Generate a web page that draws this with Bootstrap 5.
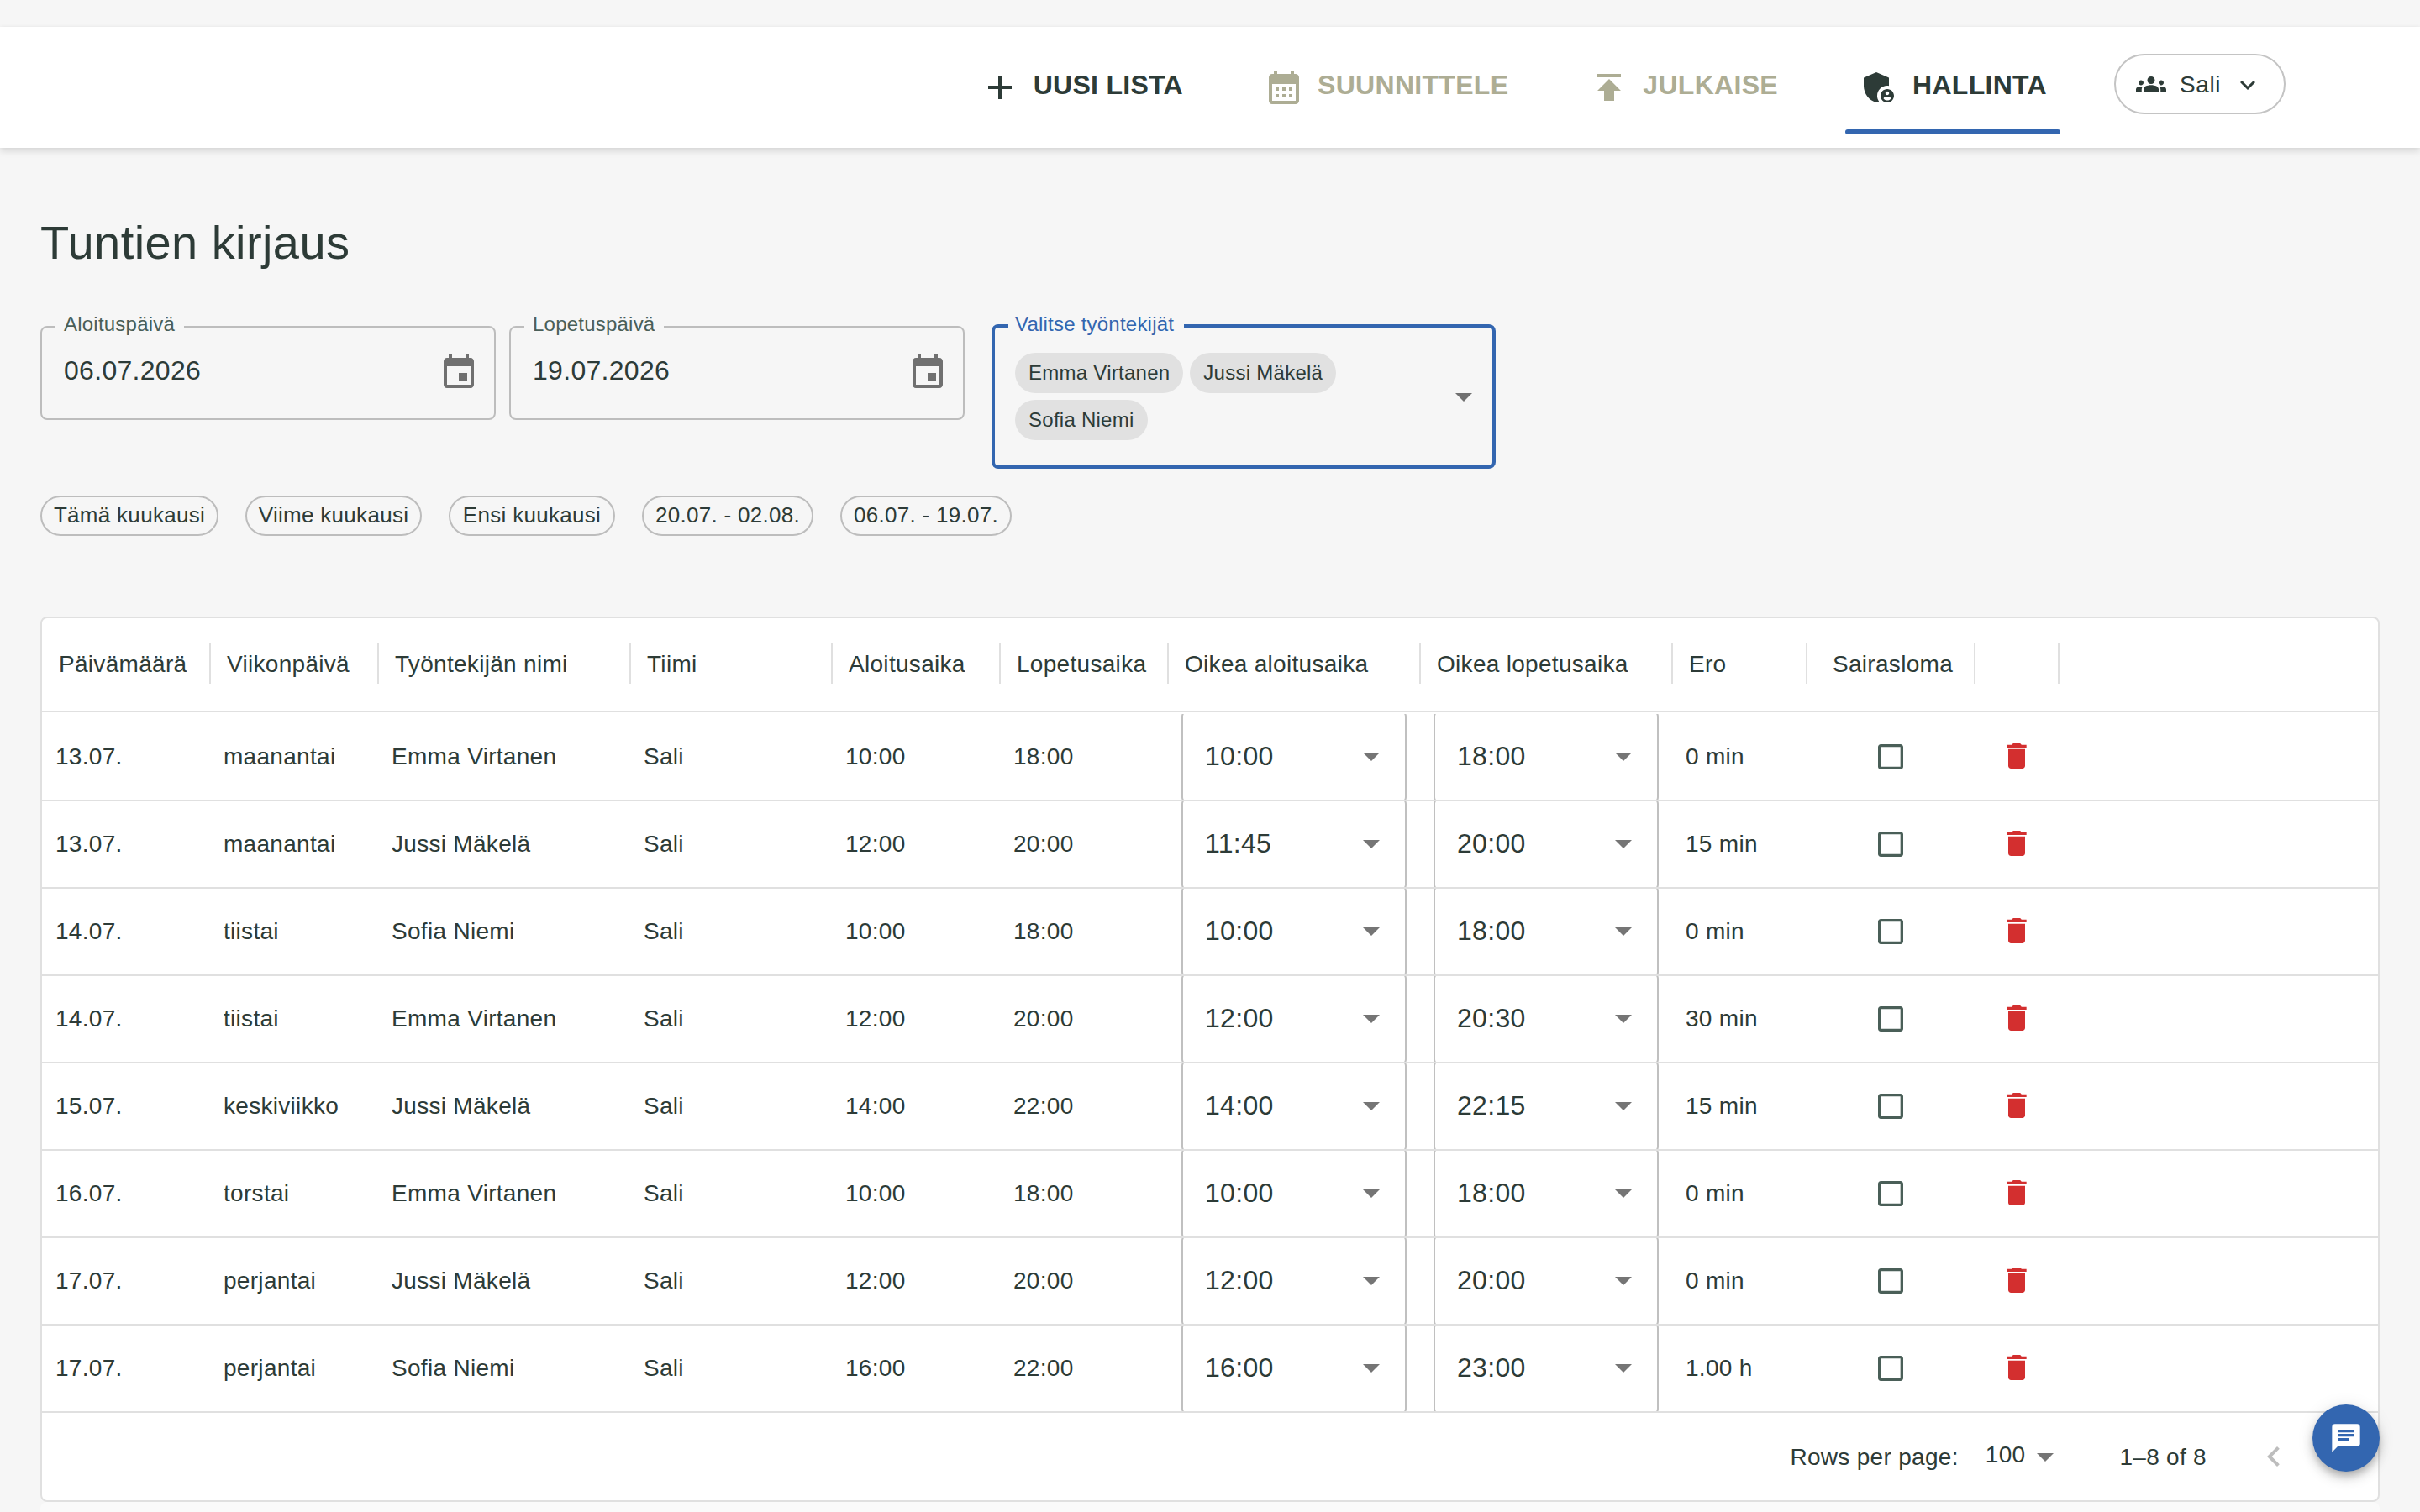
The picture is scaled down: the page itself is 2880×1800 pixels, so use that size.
<!DOCTYPE html>
<html lang="fi">
<head>
<meta charset="utf-8">
<meta name="viewport" content="width=device-width, initial-scale=1">
<title>Tuntien kirjaus</title>
<link href="https://cdn.jsdelivr.net/npm/bootstrap@5.3.0/dist/css/bootstrap.min.css" rel="stylesheet">
<style>
  :root { --ink: #2d3b37; --olive: #adad94; --accent: #3366b0; --line: #e0e0e0; --muted: #4a5f58; --canvas: #f6f6f6; }
  html, body { height: 100%; overflow: hidden; }
  body { background: var(--canvas); color: var(--ink); font-family: "Liberation Sans", Arial, sans-serif; font-size: 28px; line-height: 40px; letter-spacing: .3px; padding-top: 32px; }
  svg { display: block; fill: currentColor; flex: none; }
  .i48 { width: 48px; height: 48px; } .i40 { width: 40px; height: 40px; } .i36 { width: 36px; height: 36px; }
  .topbar { height: 144px; background: #fff; padding: 0 160px 0 0; box-shadow: 0 4px 8px rgba(0,0,0,.12), 0 0 4px rgba(0,0,0,.04); }
  .topnav { gap: 64px; }
  .topnav .nav-link { height: 112px; padding: 0 16px; gap: 16px; font-size: 32px; font-weight: 700; letter-spacing: .3px; color: var(--olive); }
  .topnav .nav-link span { margin-top: -7px; }
  .topnav .nav-link.dark { color: var(--ink); }
  .underbar { left: 0; right: 0; bottom: 0; height: 6px; border-radius: 3px; background: var(--accent); }
  .team-btn { width: 204px; height: 72px; border: 2px solid #c4c4c4; color: var(--ink); padding: 0 24px; font-size: 28px; letter-spacing: .6px; border-radius: 36px; margin-top: -8px; }
  .team-btn span { padding-top: 2px; margin-left: 16px; }
  .team-btn .arrow { margin: 2px 0 0 14px; }
  .page { padding: 76px 48px 0; }
  .page h1 { font-size: 56px; line-height: 74px; font-weight: 400; letter-spacing: .42px; margin: 0 0 60px; }
  .outline { position: relative; border: 2px solid #bdbdbd; border-radius: 8px; height: 112px; width: 542px; padding: 0 18px 0 26px; margin-top: 2px; font-size: 32px; }
  .outline .tag { position: absolute; left: 16px; top: -20px; padding: 0 11px 0 10px; background: var(--canvas); color: var(--muted); font-size: 24px; line-height: 32px; letter-spacing: .22px; white-space: nowrap; }
  .outline .val { margin-top: -6px; }
  .outline svg { color: #707070; }
  .outline.active { width: 600px; height: 172px; border: 4px solid var(--accent); padding: 0 10px 0 24px; margin: 0 0 0 32px; }
  .outline.active .tag { color: var(--accent); left: 16px; padding: 0 12px 0 8px; }
  .people { width: 420px; gap: 8px; }
  .person { height: 48px; line-height: 47px; border-radius: 24px; background: #e1e1e1; padding: 0 16px; font-size: 24px; letter-spacing: .26px; }
  .ranges { gap: 32px; margin-top: 32px; }
  .range { height: 48px; line-height: 43px; border: 2px solid #bdbdbd; border-radius: 24px; text-align: center; font-size: 26px; letter-spacing: .3px; white-space: nowrap; }
  .sheet { margin-top: 96px; border: 2px solid var(--line); border-radius: 8px; background: #fff; }
  .hours { table-layout: fixed; width: 100%; margin: 0; border-collapse: separate; border-spacing: 0; }
  .hours th { height: 112px; padding: 0 0 0 20px; font-weight: 400; position: relative; border-bottom: 2px solid var(--line); vertical-align: middle; white-space: nowrap; }
  .hours th:not(:last-child)::after { content: ""; position: absolute; right: -1px; top: 30px; width: 2px; height: 48px; background: var(--line); }
  .hours td { height: 104px; padding: 0 16px; border-bottom: 2px solid var(--line); vertical-align: middle; white-space: nowrap; }
  .hours tbody tr:first-child td { height: 106px; padding-top: 2px; }
  .clip { height: 102px; overflow: hidden; }
  .picker { flex: none; width: 268px; height: 112px; border: 2px solid #c0c0c0; border-radius: 8px; padding: 0 16px 0 26px; font-size: 32px; }
  .picker span { margin-top: -3px; }
  .picker svg { margin-top: -2px; }
  .picker svg, .pager .drop { color: #757575; }
  .tick { color: var(--muted); margin: 0 auto; } .bin { color: #d32f2f; margin: -2px auto 0; }
  .pager { height: 104px; padding-right: 100px; }
  .pager .caption-text { padding-top: 2px; }
  .count { margin-left: 64px; }
  .prev { margin-left: 56px; color: #bdbdbd; }
  .below { height: 60px; background: #fafafa; border-radius: 8px; }
  .fab { position: fixed; left: 2752px; top: 1672px; width: 80px; height: 80px; background: var(--accent); color: #fff; box-shadow: 0 6px 10px -2px rgba(0,0,0,.2), 0 8px 16px rgba(0,0,0,.14), 0 2px 20px rgba(0,0,0,.1); }
</style>
<script src="https://cdn.jsdelivr.net/npm/bootstrap@5.3.0/dist/js/bootstrap.bundle.min.js"></script>
</head>
<body>
<svg width="0" height="0" class="d-none">
  <symbol id="event" viewBox="0 0 24 24"><path d="M17 12h-5v5h5v-5zM16 1v2H8V1H6v2H5c-1.11 0-1.99.9-1.99 2L3 19c0 1.1.89 2 2 2h14c1.1 0 2-.9 2-2V5c0-1.1-.9-2-2-2h-1V1h-2zm3 18H5V8h14v11z"/></symbol>
  <symbol id="drop" viewBox="0 0 24 24"><path d="M7 10l5 5 5-5z"/></symbol>
  <symbol id="box" viewBox="0 0 24 24"><path d="M19 5v14H5V5h14m0-2H5c-1.1 0-2 .9-2 2v14c0 1.1.9 2 2 2h14c1.1 0 2-.9 2-2V5c0-1.1-.9-2-2-2z"/></symbol>
  <symbol id="bin" viewBox="0 0 24 24"><path d="M6 19c0 1.1.9 2 2 2h8c1.1 0 2-.9 2-2V7H6v12zM19 4h-3.5l-1-1h-5l-1 1H5v2h14V4z"/></symbol>
</svg>

<header class="topbar d-flex align-items-center justify-content-end position-relative">
  <nav class="nav topnav align-items-center">
    <a class="nav-link dark d-flex align-items-center"><svg class="i48" viewBox="0 0 24 24"><path d="M19 13h-6v6h-2v-6H5v-2h6V5h2v6h6v2z"/></svg><span>UUSI LISTA</span></a>
    <a class="nav-link d-flex align-items-center"><svg class="i48" viewBox="0 0 24 24"><path d="M19 4h-1V2h-2v2H8V2H6v2H5c-1.11 0-1.99.9-1.99 2L3 20c0 1.1.89 2 2 2h14c1.1 0 2-.9 2-2V6c0-1.1-.9-2-2-2zm0 16H5V10h14v10zM9 14H7v-2h2v2zm4 0h-2v-2h2v2zm4 0h-2v-2h2v2zm-8 4H7v-2h2v2zm4 0h-2v-2h2v2zm4 0h-2v-2h2v2z"/></svg><span>SUUNNITTELE</span></a>
    <a class="nav-link d-flex align-items-center"><svg class="i48" viewBox="0 0 24 24"><path d="M5 4v2h14V4H5zm0 10h4v6h6v-6h4l-7-7-7 7z"/></svg><span>JULKAISE</span></a>
    <a class="nav-link dark d-flex align-items-center position-relative"><svg class="i48" viewBox="0 0 24 24"><path d="M17 11c.34 0 .67.04 1 .09V6.27L10.5 3 3 6.27v4.91c0 4.54 3.2 8.79 7.5 9.82.55-.13 1.08-.32 1.6-.55-.69-.98-1.1-2.17-1.1-3.45 0-3.31 2.69-6 6-6z"/><path d="M17 13c-2.21 0-4 1.79-4 4s1.79 4 4 4 4-1.79 4-4-1.79-4-4-4zm0 1.38c.62 0 1.12.51 1.12 1.12s-.5 1.12-1.12 1.12-1.12-.51-1.12-1.12.5-1.12 1.12-1.12zm0 5.37c-.93 0-1.74-.46-2.24-1.17.05-.72 1.51-1.08 2.24-1.08s2.19.36 2.24 1.08c-.5.71-1.31 1.17-2.24 1.17z"/></svg><span>HALLINTA</span><i class="underbar position-absolute"></i></a>
    <button class="team-btn bg-white d-flex align-items-center"><svg class="i36" viewBox="0 0 24 24"><path d="M12 12.75c1.63 0 3.07.39 4.24.9 1.08.48 1.76 1.56 1.76 2.73V18H6v-1.61c0-1.18.68-2.26 1.76-2.73 1.17-.52 2.61-.91 4.24-.91zM4 13c1.1 0 2-.9 2-2s-.9-2-2-2-2 .9-2 2 .9 2 2 2zm1.13 1.1c-.37-.06-.74-.1-1.13-.1-.99 0-1.93.21-2.78.58C.48 14.9 0 15.62 0 16.43V18h4.5v-1.61c0-.83.23-1.61.63-2.29zM20 13c1.1 0 2-.9 2-2s-.9-2-2-2-2 .9-2 2 .9 2 2 2zm4 3.43c0-.81-.48-1.53-1.22-1.85-.85-.37-1.79-.58-2.78-.58-.39 0-.76.04-1.13.1.4.68.63 1.46.63 2.29V18H24v-1.57zM12 6c1.66 0 3 1.34 3 3s-1.34 3-3 3-3-1.34-3-3 1.34-3 3-3z"/></svg><span>Sali</span><svg class="i36 arrow" viewBox="0 0 24 24"><path d="M7.41 8.59 12 13.17l4.59-4.58L18 10l-6 6-6-6z"/></svg></button>
  </nav>
</header>

<main class="page">
  <h1>Tuntien kirjaus</h1>
  <div class="d-flex align-items-start">
    <div class="outline d-flex align-items-center justify-content-between"><span class="tag">Aloituspäivä</span><span class="val">06.07.2026</span><svg class="i48"><use href="#event"/></svg></div>
    <div class="outline d-flex align-items-center justify-content-between ms-3"><span class="tag">Lopetuspäivä</span><span class="val">19.07.2026</span><svg class="i48"><use href="#event"/></svg></div>
    <div class="outline active d-flex align-items-center justify-content-between"><span class="tag">Valitse työntekijät</span>
      <div class="people d-flex flex-wrap"><span class="person">Emma Virtanen</span><span class="person">Jussi Mäkelä</span><span class="person">Sofia Niemi</span></div>
      <svg class="i48"><use href="#drop"/></svg></div>
  </div>
  <div class="ranges d-flex">
    <span class="range" style="width:212px">Tämä kuukausi</span>
    <span class="range" style="width:210px">Viime kuukausi</span>
    <span class="range" style="width:198px">Ensi kuukausi</span>
    <span class="range" style="width:204px">20.07. - 02.08.</span>
    <span class="range" style="width:204px">06.07. - 19.07.</span>
  </div>

  <section class="sheet">
    <table class="hours">
      <colgroup><col style="width:200px"><col style="width:200px"><col style="width:300px"><col style="width:240px"><col style="width:200px"><col style="width:200px"><col style="width:300px"><col style="width:300px"><col style="width:160px"><col style="width:200px"><col style="width:100px"><col></colgroup>
      <thead><tr><th>Päivämäärä</th><th>Viikonpäivä</th><th>Työntekijän nimi</th><th>Tiimi</th><th>Aloitusaika</th><th>Lopetusaika</th><th>Oikea aloitusaika</th><th>Oikea lopetusaika</th><th>Ero</th><th style="padding-left:31px">Sairasloma</th><th></th><th></th></tr></thead>
      <tbody id="rows"></tbody>
    </table>
    <div class="pager d-flex align-items-center justify-content-end">
      <span class="caption-text">Rows per page:</span><span class="ms-4 ps-2 pb-1">100</span><svg class="i48 drop"><use href="#drop"/></svg>
      <span class="count caption-text">1–8 of 8</span>
      <svg class="i48 prev" viewBox="0 0 24 24"><path d="M15.41 16.59 10.83 12l4.58-4.59L14 6l-6 6 6 6z"/></svg>
    </div>
  </section>
  <div class="below"></div>
</main>
<a class="fab rounded-circle d-flex align-items-center justify-content-center"><svg class="i40" viewBox="0 0 24 24"><path d="M20 2H4c-1.1 0-1.99.9-1.99 2L2 22l4-4h14c1.1 0 2-.9 2-2V4c0-1.1-.9-2-2-2zM6 9h12v2H6V9zm8 5H6v-2h8v2zm4-6H6V6h12v2z"/></svg></a>
<script>
  const shifts = [
    ['13.07.', 'maanantai', 'Emma Virtanen', 'Sali', '10:00', '18:00', '10:00', '18:00', '0 min'],
    ['13.07.', 'maanantai', 'Jussi Mäkelä', 'Sali', '12:00', '20:00', '11:45', '20:00', '15 min'],
    ['14.07.', 'tiistai', 'Sofia Niemi', 'Sali', '10:00', '18:00', '10:00', '18:00', '0 min'],
    ['14.07.', 'tiistai', 'Emma Virtanen', 'Sali', '12:00', '20:00', '12:00', '20:30', '30 min'],
    ['15.07.', 'keskiviikko', 'Jussi Mäkelä', 'Sali', '14:00', '22:00', '14:00', '22:15', '15 min'],
    ['16.07.', 'torstai', 'Emma Virtanen', 'Sali', '10:00', '18:00', '10:00', '18:00', '0 min'],
    ['17.07.', 'perjantai', 'Jussi Mäkelä', 'Sali', '12:00', '20:00', '12:00', '20:00', '0 min'],
    ['17.07.', 'perjantai', 'Sofia Niemi', 'Sali', '16:00', '22:00', '16:00', '23:00', '1.00 h']
  ];
  const picker = t => `<div class="clip d-flex align-items-center"><div class="picker d-flex align-items-center justify-content-between"><span>${t}</span><svg class="i48"><use href="#drop"/></svg></div></div>`;
  document.getElementById('rows').innerHTML = shifts.map(s =>
    '<tr>' + s.map((v, i) => `<td>${i === 6 || i === 7 ? picker(v) : v}</td>`).join('') +
    '<td><svg class="i40 tick"><use href="#box"/></svg></td><td><svg class="i40 bin"><use href="#bin"/></svg></td><td></td></tr>').join('');
</script>
</body>
</html>
